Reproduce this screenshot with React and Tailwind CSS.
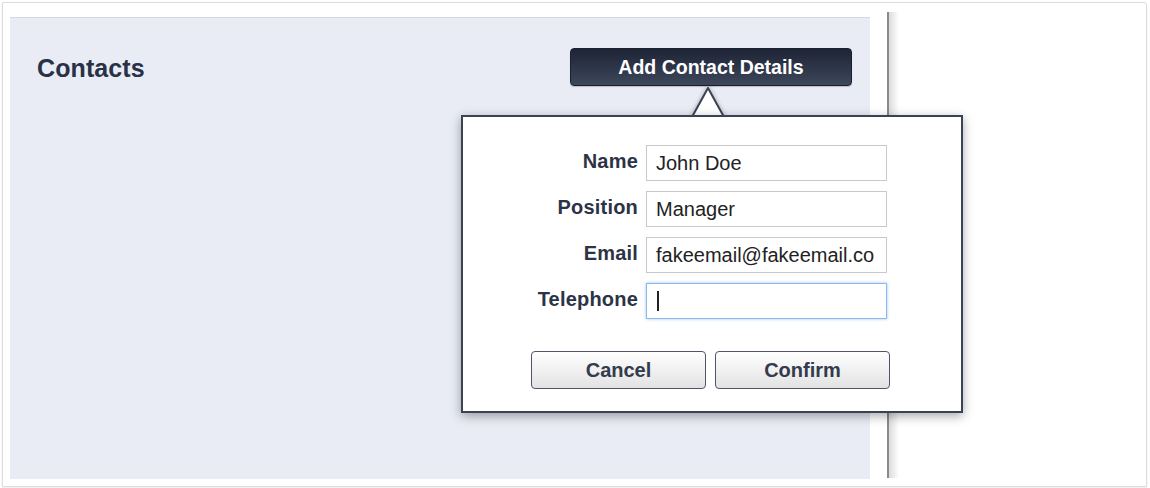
export default function App() {
  const fields = [
    { label: 'Name', value: 'John Doe' },
    { label: 'Position', value: 'Manager' },
    { label: 'Email', value: 'fakeemail@fakeemail.co' },
    { label: 'Telephone', value: '', focused: true },
  ];

  return (
    <div className="relative w-[1150px] h-[488px] bg-white overflow-hidden font-['Liberation_Sans',Arial,sans-serif]">
      {/* Outer frame */}
      <div className="m-[2px] w-[1145px] h-[485px] border border-[#dcdcdc] rounded-tr-[3px] shadow-[0_1px_2px_rgba(0,0,0,0.08)] flex">
        {/* Contacts panel */}
        <div className="ml-[7px] mt-[14px] w-[860px] h-[462px] bg-[#e9ecf4] border-t border-[#d5d9e1]">
          <div className="flex items-center justify-between pl-[27px] pr-[18px] pt-[30px]">
            <h2 className="text-[25px] leading-[30px] pt-[2px] font-bold text-[#283147] tracking-[0.1px]">Contacts</h2>
            <button className="w-[282px] h-[38px] pt-[1px] rounded-[4px] bg-gradient-to-b from-[#1d2436] to-[#3e485a] border border-[#1a2030] text-white text-[19.5px] font-bold shadow-[0_1px_1px_rgba(0,0,0,0.2)]">
              Add Contact Details
            </button>
          </div>
        </div>
        {/* Divider */}
        <div className="ml-[17px] mt-[9px] h-[466px] flex">
          <div className="w-[2px] h-full bg-[#8a8a8a]"></div>
          <div className="w-[10px] h-full bg-gradient-to-r from-[#dcdcdc] to-white"></div>
        </div>
      </div>

      {/* Popover arrow */}
      <svg className="absolute left-[691px] top-[86px] drop-shadow-[0_0_2px_rgba(0,0,0,0.3)]" width="34" height="32" viewBox="0 0 34 32">
        <polygon points="1,31 17,2 33,31" fill="white" stroke="#3a4355" strokeWidth="2" strokeLinejoin="round" />
      </svg>

      {/* Popover */}
      <div className="absolute left-[461px] top-[115px] w-[502px] h-[298px] bg-white border-2 border-[#3a4355] shadow-[0_3px_10px_rgba(0,0,0,0.35)]">
        <div className="flex flex-col gap-[10px] pt-[28px]">
          {fields.map((f) => (
            <div key={f.label} className="flex items-center">
              <label className="w-[175px] -mt-[4px] text-right text-[20px] font-bold text-[#2d3346] tracking-[0.2px]">{f.label}</label>
              <div
                className={
                  f.focused
                    ? 'ml-[8px] w-[241px] h-[36px] flex items-center pl-[10px] bg-white border border-[#8bbbec] shadow-[0_0_3px_rgba(90,160,230,0.6)] text-[20px] text-[#222]'
                    : 'ml-[8px] w-[241px] h-[36px] flex items-center pl-[9px] bg-white border border-[#c9c9c9] text-[20px] text-[#222] overflow-hidden whitespace-nowrap'
                }
              >
                {f.focused ? <span className="w-[1.5px] h-[20px] bg-[#222]"></span> : f.value}
              </div>
            </div>
          ))}
        </div>
        <div className="flex gap-[9px] pl-[68px] mt-[32px]">
          <button className="w-[175px] h-[38px] rounded-[4px] border-[1.5px] border-[#4d5567] bg-gradient-to-b from-white to-[#e2e2e2] text-[20px] font-bold text-[#333b4d]">
            Cancel
          </button>
          <button className="w-[175px] h-[38px] rounded-[4px] border-[1.5px] border-[#4d5567] bg-gradient-to-b from-white to-[#e2e2e2] text-[20px] font-bold text-[#333b4d]">
            Confirm
          </button>
        </div>
      </div>
    </div>
  );
}
